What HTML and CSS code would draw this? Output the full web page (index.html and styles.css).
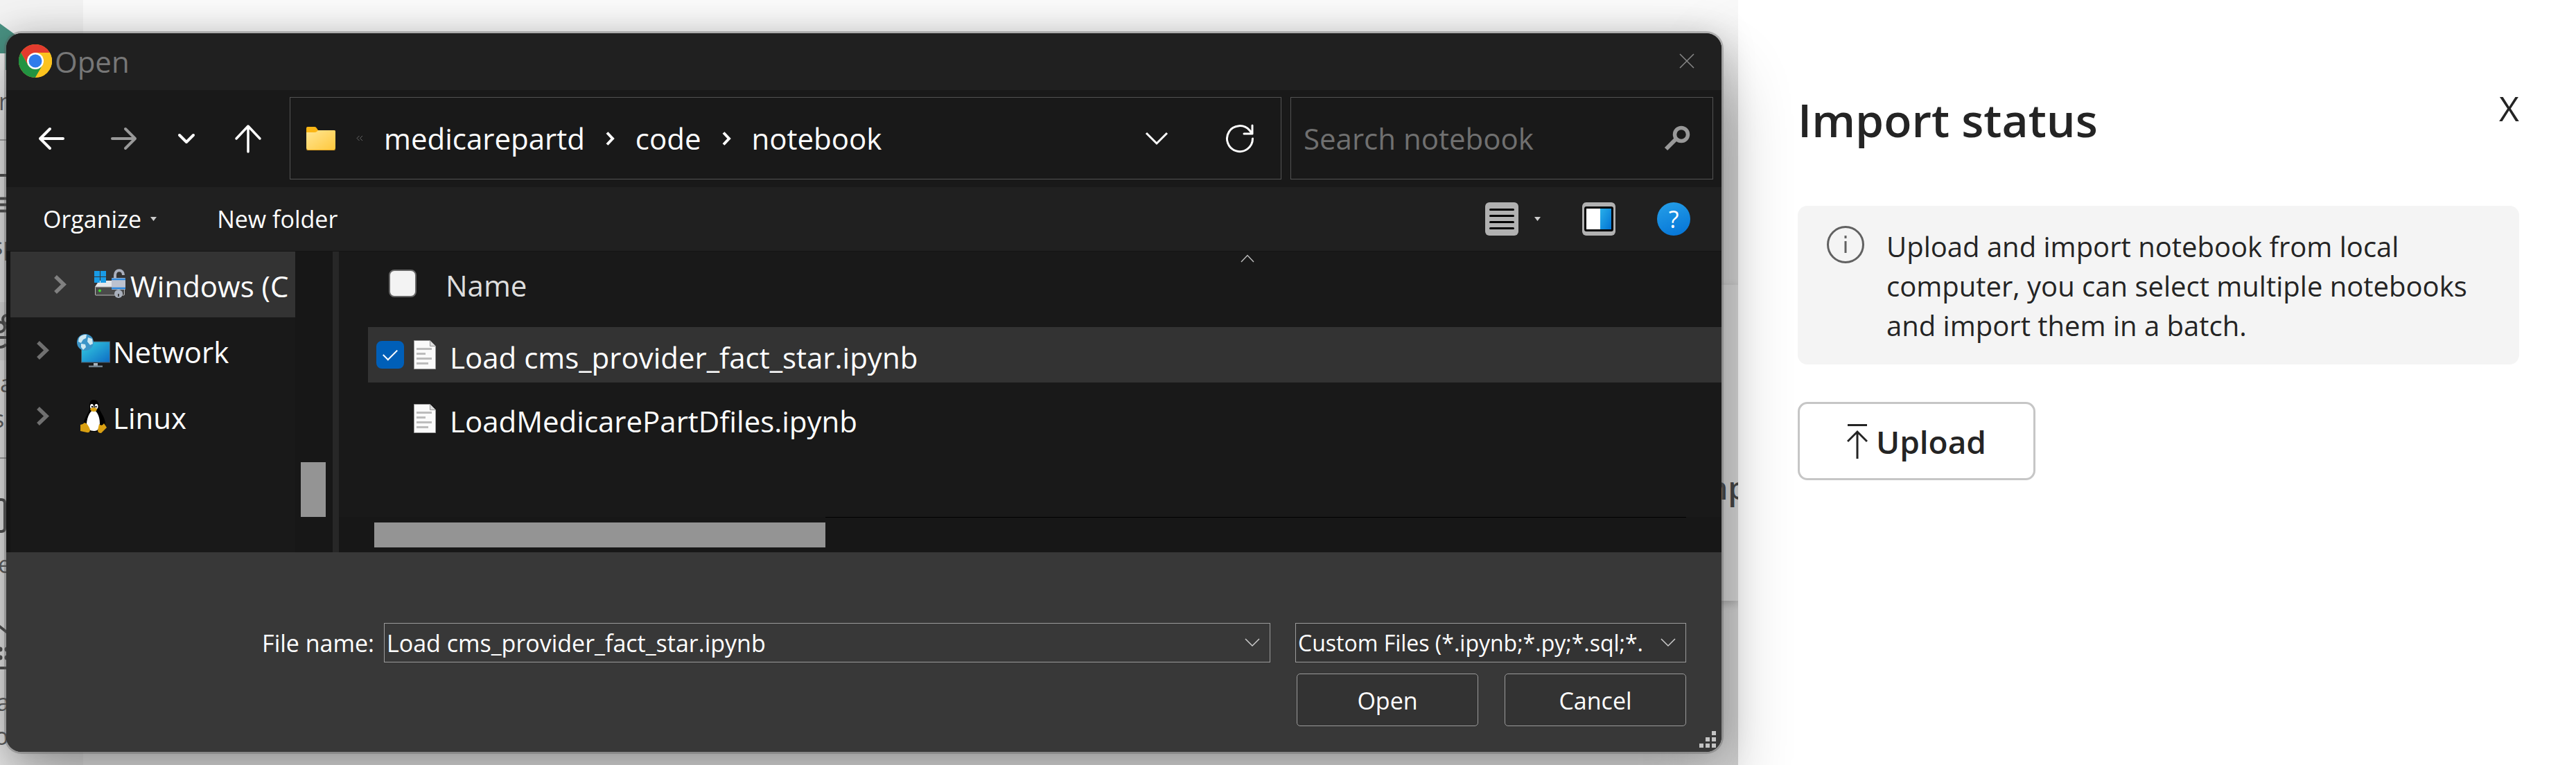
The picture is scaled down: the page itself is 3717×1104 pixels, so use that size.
FILE: index.html
```html
<!DOCTYPE html>
<html lang="en">
<head>
<meta charset="utf-8">
<title>Import status</title>
<link rel="stylesheet" href="styles.css">
</head>
<body>
<div class="screen">
  <div class="workspace">
    <!-- Page that shows behind the dialog -->
    <div class="backdrop" aria-hidden="true">
      <div class="rail">
        <svg class="rail-icons" width="30" height="1104" viewBox="0 0 30 1104" fill="none" stroke="#555" stroke-width="4">
          <path d="M0 34 22 50V77H0Z" fill="#4a9384" stroke="none"/>
          <path d="M8 77h6v24h-6z" fill="#4a9384" stroke="none"/>
          <path d="M0 202h30M0 661h30" stroke="#aaa" stroke-width="2"/>
          <path d="M0 253h30M0 286.500h30M0 295.500h30M0 304.500h30M0 964h30"/>
          <path d="M0 436h30v84H0z" fill="#000" fill-opacity=".05" stroke="none"/>
          <circle cx="10" cy="461" r="6"/><circle cx="0" cy="472" r="7"/><path d="M0 487h10M0 501c4 0 7-2 9-4"/>
          <path d="M-10 721H2q5 0 5 5v36q0 5-5 5h-12"/>
          <path d="M-2 903l14 11"/>
          <g fill="#555" stroke="none"><circle cx="0" cy="937" r="3.500"/><circle cx="0" cy="949" r="3.500"/><circle cx="10" cy="937" r="3.500"/><circle cx="10" cy="949" r="3.500"/></g>
        </svg>
        <span class="rail-text rail-text-1">n</span>
        <span class="rail-text rail-text-2">sp</span>
        <span class="rail-text rail-text-3">a</span>
        <span class="rail-text rail-text-4">s</span>
        <span class="rail-text rail-text-5">e</span>
        <span class="rail-text rail-text-6">a</span>
        <span class="rail-text rail-text-7">o</span>
      </div>
      <div class="page"><div class="card"><span class="card-text">mp</span></div></div>
    </div>

    <section class="dialog" role="dialog" aria-label="Open">
      <header class="titlebar">
        <svg width="48" height="48" viewBox="0 0 48 48">
          <circle cx="24" cy="24" r="24" fill="#fcc31e"/>
          <path d="M3.200 12A24 24 0 0 1 44.800 12H24L13.600 30Z" fill="#e33b2e"/>
          <path d="M3.200 12A24 24 0 0 0 24 48L34.400 30 24 24 13.600 30Z" fill="#229342"/>
          <path d="M24 12h20.800A24 24 0 0 1 24 48l10.400-18Z" fill="#fcc31e"/>
          <circle cx="24" cy="24" r="12" fill="#fff"/>
          <circle cx="24" cy="24" r="9.500" fill="#2f7ceb"/>
        </svg>
        <h1 class="dialog-title">Open</h1>
        <button class="icon-button close-dialog" aria-label="Close">
          <svg width="22" height="22" viewBox="0 0 22 22" stroke="#888" stroke-width="1.500"><path d="M1 1l20 20M21 1 1 21"/></svg>
        </button>
      </header>

      <nav class="navbar">
        <div class="history">
          <button class="icon-button" aria-label="Back"><svg width="40" height="40" viewBox="0 0 40 40" fill="none" stroke="#fff" stroke-width="4" stroke-linecap="round" stroke-linejoin="round"><path d="M37 20H4M18 6 4 20l14 14"/></svg></button>
          <button class="icon-button" aria-label="Forward"><svg width="40" height="40" viewBox="0 0 40 40" fill="none" stroke="#999" stroke-width="4" stroke-linecap="round" stroke-linejoin="round"><path d="M3 20h33M22 6l14 14-14 14"/></svg></button>
          <button class="icon-button" aria-label="Recent locations"><svg width="28" height="28" viewBox="0 0 28 28" fill="none" stroke="#fff" stroke-width="4" stroke-linecap="round" stroke-linejoin="round"><path d="M4 9l10 10L24 9"/></svg></button>
          <button class="icon-button" aria-label="Up"><svg width="44" height="44" viewBox="0 0 44 44" fill="none" stroke="#fff" stroke-width="3.500" stroke-linecap="round" stroke-linejoin="round"><path d="M22 41V5M5 22 22 4l17 18"/></svg></button>
        </div>
        <div class="address">
          <svg width="42" height="34" viewBox="0 0 42 34">
            <defs><linearGradient id="folder" x1="0" y1="0" x2="1" y2="1"><stop offset="0" stop-color="#ffe694"/><stop offset="1" stop-color="#ffc83d"/></linearGradient></defs>
            <path d="M0 2q0-2 2-2h10q2 0 3 2l2 3h23q2 0 2 2v20H0Z" fill="#fbb615"/>
            <path d="M0 8h12q2 0 3-1l2-2h23q2 0 2 2v24q0 2-2 2H2q-2 0-2-2Z" fill="url(#folder)"/>
            <path d="M0 31q0 2 2 2h38q2 0 2-2v1q0 2-2 2H2q-2 0-2-2Z" fill="#e0a11c"/>
          </svg>
          <svg width="10" height="10" viewBox="0 0 10 10" fill="none" stroke="#666"><path d="M4.500 1 1 4.500 4.500 8M9 1 5.500 4.500 9 8"/></svg>
          <a class="crumb" href="#">medicarepartd</a>
          <svg width="13" height="20" viewBox="0 0 13 20" fill="none" stroke="#fff" stroke-width="4"><path d="M2 1.500 10 10l-8 8.500"/></svg>
          <a class="crumb" href="#">code</a>
          <svg width="13" height="20" viewBox="0 0 13 20" fill="none" stroke="#fff" stroke-width="4"><path d="M2 1.500 10 10l-8 8.500"/></svg>
          <a class="crumb" href="#">notebook</a>
          <div class="address-actions">
            <button class="icon-button" aria-label="Previous locations"><svg width="34" height="20" viewBox="0 0 34 20" fill="none" stroke="#fff" stroke-width="3"><path d="M2 2l15 15L32 2"/></svg></button>
            <button class="icon-button" aria-label="Refresh"><svg width="42" height="42" viewBox="0 0 42 42" fill="none" stroke="#fff" stroke-width="3" stroke-linecap="round" stroke-linejoin="round"><path d="M39.500 21A18.500 18.500 0 1 1 35 9l4 5M39 2v12H27"/></svg></button>
          </div>
        </div>
        <div class="search">
          <input class="search-input" type="search" placeholder="Search notebook" aria-label="Search notebook">
          <svg width="38" height="38" viewBox="0 0 38 38" fill="none" stroke="#999"><circle cx="25" cy="13" r="9.500" stroke-width="5.500"/><path d="M17 20 3 34" stroke-width="6"/></svg>
        </div>
      </nav>

      <div class="toolbar">
        <button class="text-button organize">Organize <svg width="9" height="6" viewBox="0 0 9 6" fill="#ccc"><path d="M0 0h9L4.500 6Z"/></svg></button>
        <button class="text-button">New folder</button>
        <div class="toolbar-right">
          <button class="icon-button view-mode" aria-label="Change view">
            <svg width="48" height="48" viewBox="0 0 48 48"><rect width="48" height="48" rx="6" fill="#b1b1b1"/><path d="M7.500 10.500h33M7.500 19.500h33M7.500 28.500h33M7.500 37.500h33" stroke="#000" stroke-width="3" stroke-linecap="round"/></svg>
            <svg width="9" height="6" viewBox="0 0 9 6" fill="#ccc"><path d="M0 0h9L4.500 6Z"/></svg>
          </button>
          <button class="icon-button" aria-label="Show the preview pane">
            <svg width="48" height="48" viewBox="0 0 48 48">
              <defs><linearGradient id="blue" x1="0" y1="0" x2="1" y2="1"><stop offset="0" stop-color="#29b0ea"/><stop offset="1" stop-color="#0273d4"/></linearGradient></defs>
              <rect width="48" height="48" rx="6" fill="#b1b1b1"/><rect x="3" y="6" width="42" height="36" rx="3" fill="#000"/><path d="M6 9h20v30H6z" fill="#fff"/><path d="M26 9h16v30H26z" fill="url(#blue)"/>
            </svg>
          </button>
          <button class="help" aria-label="Get help">?</button>
        </div>
      </div>

      <div class="browser">
        <div class="sidebar">
          <ul class="tree">
            <li class="tree-item tree-item-selected">
              <svg width="18" height="27" viewBox="0 0 18 27" fill="none" stroke="#808080" stroke-width="5.500"><path d="M2 2l12 11.500L2 25"/></svg>
              <svg width="48" height="48" viewBox="0 0 48 48">
                <path d="M7 18h32l6 9H1Z" fill="#e4e6ea"/><rect x="1.500" y="27" width="42" height="12" rx="1" fill="#4a4a4a" stroke="#bbb"/><circle cx="8" cy="32.500" r="2" fill="#3ee02e"/>
                <path d="M0 4h8v8H0zM9 4h8v8H9zM0 13h8v8H0zM9 13h8v8H9z" fill="#189be6"/>
                <path d="M30 17V10c0-9 12-9 12 0" fill="none" stroke="#a9aebb" stroke-width="4"/>
                <rect x="25" y="14" width="20" height="17" rx="1" fill="#bcc2cf"/><path d="M25 16h20M25 29h20" stroke="#2b87dd" stroke-width="2.500"/>
                <circle cx="35" cy="37" r="6" fill="#a9b0bc"/><path d="M35 37v4" stroke="#444" stroke-width="2"/>
              </svg>
              <span class="tree-label">Windows (C</span>
            </li>
            <li class="tree-item">
              <svg width="18" height="27" viewBox="0 0 18 27" fill="none" stroke="#707070" stroke-width="5.500"><path d="M2 2l12 11.500L2 25"/></svg>
              <svg width="48" height="48" viewBox="0 0 48 48">
                <defs><linearGradient id="monitor" x1="0" y1="0" x2="1" y2="1"><stop offset="0" stop-color="#36d0e2"/><stop offset="1" stop-color="#0d6cc4"/></linearGradient></defs>
                <rect x="6.500" y="11" width="41" height="30" fill="url(#monitor)" stroke="#4c5864"/><path d="M24 42h6v4h-6z" fill="#a9b4bd"/><path d="M17 45.500h20v2.500H17z" fill="#71808c"/>
                <circle cx="12" cy="12" r="12" fill="#3d95c8"/><path d="M3 6c3-5 8-5 11-5l-1 5-4 2-3 5-4-2ZM6 14l6 1 1 4-4 4-3-4ZM16 5l6 2 1 7-4 2-4-5Z" fill="#cfe9f2"/>
              </svg>
              <span class="tree-label">Network</span>
            </li>
            <li class="tree-item">
              <svg width="18" height="27" viewBox="0 0 18 27" fill="none" stroke="#707070" stroke-width="5.500"><path d="M2 2l12 11.500L2 25"/></svg>
              <svg width="48" height="48" viewBox="0 0 48 48">
                <path d="M24 0c6 0 8 5 8 10 0 7 9 14 9 25 0 6-5 11-16 11S10 42 10 34c0-9 8-14 8-22 0-6 0-12 6-12Z" fill="#000"/>
                <path d="M24 15c5 0 9 10 9 19 0 8-4 11-8 11-6 0-11-3-11-10 0-8 5-20 10-20Z" fill="#fff"/>
                <ellipse cx="21.500" cy="9.500" rx="2.500" ry="3.500" fill="#fff"/><ellipse cx="28" cy="9.500" rx="2.500" ry="3.500" fill="#fff"/><circle cx="22" cy="10" r="1.200"/><circle cx="27.500" cy="10" r="1.200"/>
                <path d="M19 13q5-4 10 0 0 4-5 4-4 0-5-4ZM11 33q4 0 8 10 0 5-5 4L5 45V36q3 0 6-3ZM32 35q4 4 7-1l4 6-8 8q-5 0-5-4Z" fill="#d9a012"/>
              </svg>
              <span class="tree-label">Linux</span>
            </li>
          </ul>
          <div class="vertical-scroll"><div class="vertical-thumb"></div></div>
        </div>
        <div class="files">
          <table class="file-table">
            <thead>
              <tr class="file-head">
                <th class="select-cell"><input class="tick" type="checkbox" aria-label="Select all"></th>
                <th class="name-head">Name</th>
              </tr>
            </thead>
            <tbody>
              <tr class="file-row file-row-selected">
                <td class="select-cell"><input class="tick" id="file-1" type="checkbox" checked></td>
                <td class="file-cell">
                  <svg width="32" height="42" viewBox="0 0 32 42"><path d="M.5.500h23l8 8v33H.5Z" fill="#fafafa" stroke="#999"/><path d="M23.500.500v8h8" fill="#ddd" stroke="#999"/><path d="M4 12.500h22M4 19.500h13M4 26.500h22M4 33.500h17" stroke="#bcbcbc" stroke-width="3"/></svg>
                  <label for="file-1">Load cms_provider_fact_star.ipynb</label>
                </td>
              </tr>
              <tr class="file-row">
                <td class="select-cell"><input class="tick tick-hidden" id="file-2" type="checkbox"></td>
                <td class="file-cell">
                  <svg width="32" height="42" viewBox="0 0 32 42"><path d="M.5.500h23l8 8v33H.5Z" fill="#fafafa" stroke="#999"/><path d="M23.500.500v8h8" fill="#ddd" stroke="#999"/><path d="M4 12.500h22M4 19.500h13M4 26.500h22M4 33.500h17" stroke="#bcbcbc" stroke-width="3"/></svg>
                  <label for="file-2">LoadMedicarePartDfiles.ipynb</label>
                </td>
              </tr>
            </tbody>
          </table>
          <svg class="sort-mark" width="20" height="12" viewBox="0 0 20 12" fill="none" stroke="#bbb" stroke-width="1.500"><path d="M1 11 10 1.500 19 11"/></svg>
          <div class="horizontal-scroll"><div class="horizontal-thumb"></div><div class="horizontal-track"></div></div>
        </div>
      </div>

      <form class="dialog-footer">
        <div class="fields">
          <label class="field-label" for="file-name">File name:</label>
          <div class="combo">
            <input class="combo-input" id="file-name" type="text" value="Load cms_provider_fact_star.ipynb">
            <svg width="22" height="13" viewBox="0 0 22 13" fill="none" stroke="#ccc" stroke-width="1.500"><path d="M1 1l10 10L21 1"/></svg>
          </div>
          <div class="combo combo-filled">
            <select class="combo-input" aria-label="File type"><option>Custom Files (*.ipynb;*.py;*.sql;*.</option></select>
            <svg width="22" height="13" viewBox="0 0 22 13" fill="none" stroke="#ccc" stroke-width="1.500"><path d="M1 1l10 10L21 1"/></svg>
          </div>
        </div>
        <div class="actions">
          <button class="action" type="button">Open</button>
          <button class="action" type="button">Cancel</button>
        </div>
        <svg class="grip" width="24" height="24" viewBox="0 0 24 24" fill="#c4c4c4"><path d="M18 0h6v6h-6zM9 9h6v6H9zM18 9h6v6h-6zM0 18h6v6H0zM9 18h6v6H9zM18 18h6v6h-6z"/></svg>
      </form>
    </section>
  </div>

  <aside class="panel">
    <header class="panel-header">
      <h2 class="panel-title">Import status</h2>
      <button class="panel-close" aria-label="Close panel">X</button>
    </header>
    <div class="notice">
      <svg width="54" height="54" viewBox="0 0 54 54" fill="none" stroke="#616161" stroke-width="3"><circle cx="27" cy="27" r="25.500"/><path d="M27 22v17M27 14v4"/></svg>
      <p class="notice-text">Upload and import notebook from local computer, you can select multiple notebooks and import them in a batch.</p>
    </div>
    <button class="upload">
      <svg width="30" height="50" viewBox="0 0 30 50" fill="none" stroke="#242424" stroke-width="3"><path d="M1 1.500h28M15 50V11M1 25 15 11l14 14"/></svg>
      Upload
    </button>
  </aside>
</div>
</body>
</html>
```
FILE: styles.css
```css
* {
  box-sizing: border-box;
}

body {
  margin: 0;
  font-family: "Open Sans", "Noto Sans", sans-serif;
  font-size: 42px;
  background: #fff;
}

button,
input,
select {
  font: inherit;
  color: inherit;
  margin: 0;
}

button {
  padding: 0;
  border: 0;
  background: none;
}

svg {
  display: block;
  flex: none;
}

.screen {
  display: grid;
  grid-template-columns: minmax(0, 2508fr) minmax(0, 1209fr);
  min-height: 100vh;
  overflow: hidden;
}

/* Page behind the dialog */

.workspace {
  position: relative;
  padding: 48px 24px 19px 9px;
}

.backdrop {
  position: absolute;
  inset: 0;
  display: flex;
  overflow: hidden;
}

.rail {
  position: relative;
  flex: none;
  width: 120px;
  background: #f2f2f2;
}

.rail-icons {
  position: absolute;
  left: 0;
  top: 0;
}

.rail-text {
  position: absolute;
  font-size: 34px;
  line-height: 40px;
  color: #666;
}

.rail-text-1 { left: -2px; top: 126px; }
.rail-text-2 { left: -12px; top: 335px; }
.rail-text-3 { left: 0; top: 533px; }
.rail-text-4 { left: -10px; top: 584px; }
.rail-text-5 { left: -3px; top: 794px; }
.rail-text-6 { left: -5px; top: 993px; }
.rail-text-7 { left: -8px; top: 1042px; }

.page {
  flex: 1;
  padding: 411px 0 237px;
  background: #fafafa;
  box-shadow: 0 0 12px rgba(0, 0, 0, .2);
}

.card {
  position: relative;
  height: 100%;
  background: #fff;
  box-shadow: 0 4px 12px rgba(0, 0, 0, .2);
}

.card-text {
  position: absolute;
  right: -14px;
  top: 262px;
  font-size: 46px;
  font-weight: 600;
  line-height: 60px;
  color: #555;
}

/* Open dialog */

.dialog {
  position: relative;
  z-index: 2;
  display: flex;
  flex-direction: column;
  overflow: hidden;
  border-radius: 22px;
  background: #191919;
  color: #fff;
  box-shadow:
    0 0 0 3px rgba(90, 90, 90, .35),
    0 0 50px rgba(0, 0, 0, .22),
    0 64px 100px rgba(0, 0, 0, .3);
}

.icon-button {
  display: flex;
  align-items: center;
  justify-content: center;
}

.titlebar {
  display: flex;
  align-items: center;
  gap: 4px;
  height: 82px;
  padding: 0 39px 2px 18px;
  background: #202020;
}

.dialog-title {
  margin: 0;
  font-size: 42px;
  font-weight: 400;
  color: #777;
}

.close-dialog {
  margin-left: auto;
}

.navbar {
  display: flex;
  height: 140px;
  padding: 10px 12px 11px 0;
}

.history {
  display: grid;
  grid-template-columns: 105px 105px 75px 103px;
  flex: none;
  width: 409px;
  padding-left: 12px;
}

.address {
  display: flex;
  flex: 1;
  align-items: center;
  gap: 30px;
  min-width: 0;
  padding: 0 38px 0 23px;
  border: 1px solid #535353;
}

.crumb {
  color: #fff;
  text-decoration: none;
}

.address-actions {
  display: flex;
  align-items: center;
  gap: 82px;
  margin-left: auto;
}

.search {
  display: flex;
  align-items: center;
  flex: none;
  width: 610px;
  margin-left: 13px;
  padding: 0 32px 0 18px;
  border: 1px solid #535353;
}

.search-input {
  flex: 1;
  min-width: 0;
  padding: 0;
  border: 0;
  outline: 0;
  background: none;
  appearance: none;
}

.search-input::placeholder {
  color: #707070;
}

.toolbar {
  display: flex;
  align-items: center;
  gap: 87px;
  height: 92px;
  padding: 0 45px 0 53px;
  background: #202020;
  font-size: 34px;
}

.text-button {
  display: flex;
  align-items: center;
  gap: 13px;
}

.toolbar-right {
  display: flex;
  align-items: center;
  gap: 60px;
  margin-left: auto;
}

.view-mode {
  gap: 23px;
}

.help {
  width: 48px;
  height: 48px;
  border-radius: 50%;
  background: linear-gradient(160deg, #26a0e8, #0372d6);
  font-size: 34px;
  line-height: 48px;
  text-align: center;
}

.browser {
  display: flex;
  min-height: 435px;
  border-top: 1px solid #141414;
}

.sidebar {
  display: flex;
  flex: none;
  width: 480px;
  border-left: 6px solid #141414;
  border-right: 9px solid #272727;
}

.tree {
  width: 411px;
  margin: 0;
  padding: 0;
  list-style: none;
}

.tree-item {
  display: flex;
  align-items: center;
  height: 95px;
  padding-left: 38px;
  white-space: nowrap;
}

.tree-item-selected {
  padding-left: 63px;
  background: #333;
}

.tree-item svg + svg {
  margin-left: 40px;
}

.tree-label {
  margin-left: 4px;
  padding-top: 4px;
}

.vertical-scroll {
  display: flex;
  flex: 1;
  align-items: flex-end;
  justify-content: center;
  padding: 0 2px 51px 0;
  background: #171717;
}

.vertical-thumb {
  width: 36px;
  height: 79px;
  background: #949494;
}

.files {
  position: relative;
  display: flex;
  flex: 1;
  flex-direction: column;
  min-width: 0;
}

.file-table,
.file-table thead,
.file-table tbody {
  display: block;
}

.file-head,
.file-row {
  display: flex;
  align-items: center;
}

.file-head {
  height: 92px;
  margin-bottom: 17px;
  padding-left: 72px;
}

.file-row {
  height: 80px;
  margin: 0 0 12px 42px;
  padding-left: 12px;
}

.file-row-selected {
  background: #333;
}

.select-cell {
  display: flex;
  padding: 0;
}

.tick {
  display: flex;
  align-items: center;
  justify-content: center;
  width: 40px;
  height: 40px;
  border: 2px solid #666;
  border-radius: 8px;
  background: #f3f3f3;
  appearance: none;
}

.tick:checked {
  border-color: #005fb8;
  background: #005fb8;
}

.tick:checked::after {
  content: "";
  width: 18px;
  height: 9px;
  margin-bottom: 6px;
  border: solid #fff;
  border-width: 0 0 2px 2px;
  transform: rotate(-45deg);
}

.tick-hidden {
  opacity: 0;
}

.name-head {
  padding: 4px 0 0 42px;
  color: #dedede;
  font-weight: 400;
}

.file-cell {
  display: flex;
  align-items: center;
  gap: 20px;
  padding: 0 0 0 14px;
}

.file-cell label {
  padding-top: 6px;
}

.sort-mark {
  position: absolute;
  left: 65.2%;
  top: 4px;
}

.horizontal-scroll {
  display: flex;
  height: 51px;
  margin-top: auto;
  padding: 0 51px;
  background: #171717;
}

.horizontal-thumb {
  width: 651px;
  height: 36px;
  margin-top: 8px;
  background: #949494;
}

.horizontal-track {
  flex: 1;
  border-top: 1px solid #000;
}

.dialog-footer {
  position: relative;
  display: flex;
  flex-direction: column;
  gap: 16px;
  padding: 102px 51px 37px 0;
  background: #383838;
  font-size: 34px;
}

.fields {
  display: grid;
  grid-template-columns: 545px 1fr 564px;
  align-items: center;
}

.field-label {
  padding-right: 14px;
  text-align: right;
}

.combo {
  display: flex;
  align-items: center;
  height: 57px;
  padding-right: 14px;
  border: 1px solid #9b9b9b;
}

.combo-filled {
  background: #333;
  font-size: 32px;
}

.fields .combo:nth-child(2) {
  margin-right: 36px;
}

.combo-input {
  flex: 1;
  min-width: 0;
  padding: 0 0 0 3px;
  border: 0;
  outline: 0;
  background: none;
  appearance: none;
}

.actions {
  display: flex;
  justify-content: flex-end;
  gap: 38px;
}

.action {
  width: 262px;
  height: 76px;
  padding-top: 2px;
  border: 1px solid #9b9b9b;
  border-radius: 5px;
  background: #333;
}

.grip {
  position: absolute;
  right: 8px;
  bottom: 6px;
}

/* Import status panel */

.panel {
  position: relative;
  z-index: 1;
  padding: 124px 82px 40px 86px;
  background: #fff;
  color: #242424;
  box-shadow: 0 100px 120px rgba(0, 0, 0, .3);
}

.panel-header {
  display: flex;
  align-items: flex-start;
  justify-content: space-between;
}

.panel-title {
  margin: 0;
  font-size: 66px;
  font-weight: 600;
  line-height: 96px;
}

.panel-close {
  font-size: 50px;
  line-height: 64px;
}

.notice {
  display: flex;
  gap: 32px;
  margin: 77px 0 54px;
  padding: 29px 40px 28px 42px;
  border-radius: 14px;
  background: #f4f4f4;
}

.notice-text {
  margin: 0;
  padding-top: 1px;
  font-size: 40px;
  line-height: 57px;
}

.upload {
  display: flex;
  align-items: center;
  justify-content: center;
  gap: 12px;
  width: 343px;
  height: 113px;
  border: 3px solid #c6c6c6;
  border-radius: 14px;
  background: #fff;
  font-size: 46px;
  font-weight: 600;
}
```
